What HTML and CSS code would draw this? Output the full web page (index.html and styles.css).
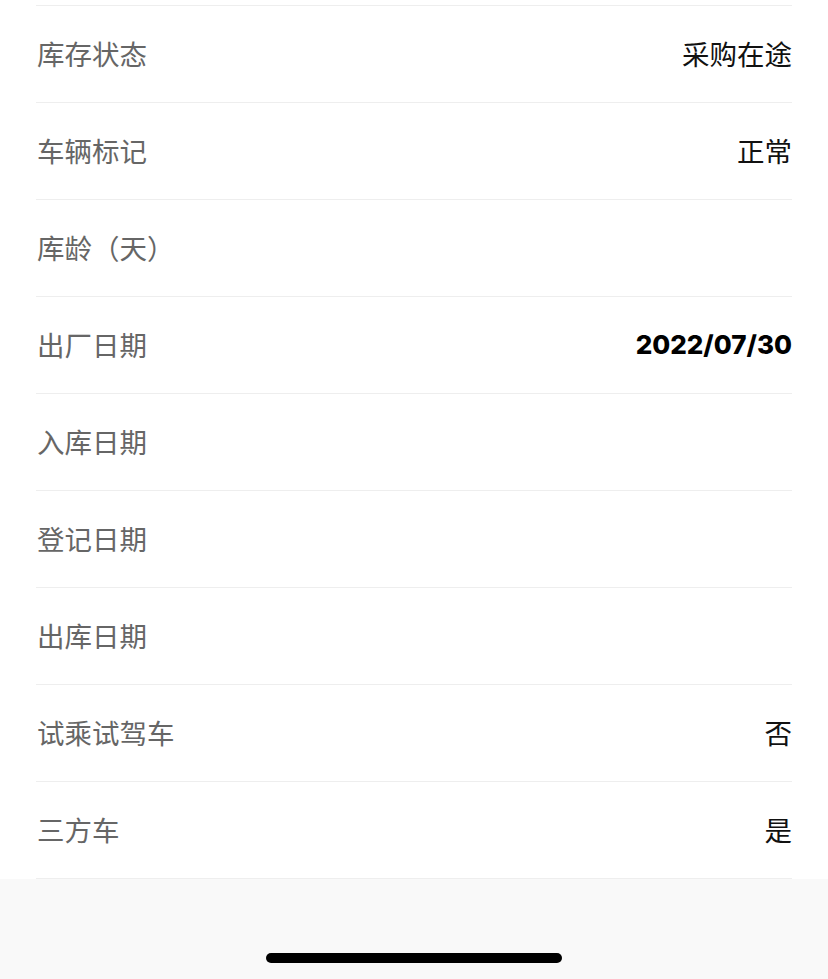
FILE: index.html
```html
<!DOCTYPE html>
<html lang="zh-CN">
<head>
    <meta charset="UTF-8">
    <meta name="viewport" content="width=device-width, initial-scale=1.0">
    <title>车辆详情</title>
    <link rel="stylesheet" href="styles.css">
</head>
<body>
    <div class="list">
        <div class="row"><span class="label">库存状态</span><span class="value">采购在途</span></div>
        <div class="row"><span class="label">车辆标记</span><span class="value">正常</span></div>
        <div class="row"><span class="label">库龄（天）</span><span class="value"></span></div>
        <div class="row"><span class="label">出厂日期</span><span class="value date">2022/07/30</span></div>
        <div class="row"><span class="label">入库日期</span><span class="value"></span></div>
        <div class="row"><span class="label">登记日期</span><span class="value"></span></div>
        <div class="row"><span class="label">出库日期</span><span class="value"></span></div>
        <div class="row"><span class="label">试乘试驾车</span><span class="value">否</span></div>
        <div class="row"><span class="label">三方车</span><span class="value">是</span></div>
    </div>
    <div class="home-area">
        <div class="home-bar"></div>
    </div>
</body>
</html>
```

FILE: styles.css
```css
body {
    font-family: "Noto Sans CJK SC", "Noto Sans", sans-serif;
    background-color: #fff;
    margin: 0;
    overflow: hidden;
}
.list {
    margin: 5px 36px 0 36px;
    border-top: 1px solid #eeeeee;
}
.row {
    display: flex;
    justify-content: space-between;
    align-items: center;
    height: 97px;
    padding-bottom: 2px;
    box-sizing: border-box;
    border-bottom: 1px solid #eeeeee;
    font-size: 27.5px;
}
.label {
    color: #666;
    padding-left: 1px;
}
.value {
    color: #111;
}
.date {
    font-family: Inter, "Liberation Sans", sans-serif;
    font-weight: 800;
    font-size: 26px;
    color: #000;
}
.home-area {
    height: 100px;
    background-color: #f9f9f9;
    display: flex;
    justify-content: center;
}
.home-bar {
    width: 296px;
    height: 10px;
    margin-top: 74px;
    border-radius: 5px;
    background-color: #000;
}
```
